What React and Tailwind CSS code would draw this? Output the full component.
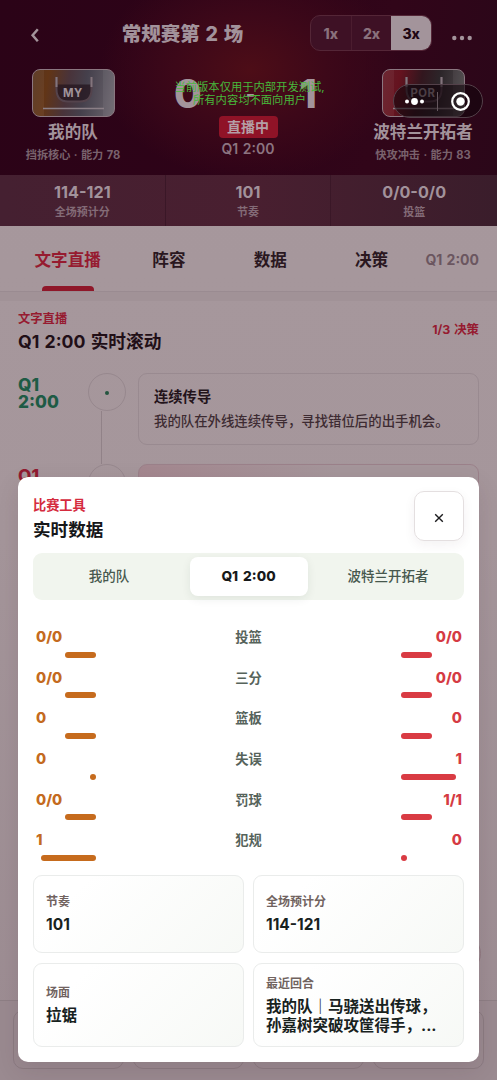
import React, { useState } from 'react';
import { clsx } from 'clsx';

const SPEEDS = ['1x', '2x', '3x'];
const TABS = ['文字直播', '阵容', '数据', '决策'];

const SUMMARY = [
  { value: '114-121', label: '全场预计分' },
  { value: '101', label: '节奏' },
  { value: '0/0-0/0', label: '投篮' },
];

// bar widths are px
const COMPARE = [
  { label: '投篮', home: '0/0', away: '0/0', homeBar: 31, awayBar: 31 },
  { label: '三分', home: '0/0', away: '0/0', homeBar: 31, awayBar: 31 },
  { label: '篮板', home: '0', away: '0', homeBar: 31, awayBar: 31 },
  { label: '失误', home: '0', away: '1', homeBar: 6, awayBar: 55 },
  { label: '罚球', home: '0/0', away: '1/1', homeBar: 31, awayBar: 31 },
  { label: '犯规', home: '1', away: '0', homeBar: 55, awayBar: 6 },
];

function Jersey({ code, away }) {
  return (
    <div
      className={clsx(
        'relative w-[83px] h-[48px] rounded-[8px] border border-[#8b7780] overflow-hidden',
        away
          ? 'bg-[linear-gradient(100deg,#641b27_0%,#65131f_20%,#32161e_45%,#2c2529_65%,#514b4e_100%)]'
          : 'bg-[linear-gradient(100deg,#56341f_0%,#623516_18%,#49333a_42%,#45404c_62%,#6c666e_100%)]'
      )}
    >
      <div className="absolute inset-y-0 left-0 w-[11px] bg-white/5" />
      <div className="absolute inset-y-0 right-0 w-[11px] bg-white/5" />
      <svg className="absolute inset-0" width="81" height="46" viewBox="0 0 81 46" fill="none">
        <path d="M23.5 14.5 H58.5 V20 Q58.5 31.5 48 31.5 H34 Q23.5 31.5 23.5 20 Z" fill="#24151f" fillOpacity=".75" />
        <path d="M23.5 7 V19 Q23.5 31.5 35 31.5 H47 Q58.5 31.5 58.5 19 V7" stroke="#54434c" strokeWidth="2" />
        <path d="M23.5 7 V17 M58.5 7 V17" stroke="#83757d" strokeWidth="2" />
        <path d="M10 38.5 H71" stroke="#8b7f86" strokeWidth="1.5" />
      </svg>
      <span className="absolute inset-x-0 top-[17px] text-center text-[11.3px] leading-[13px] font-bold tracking-[0.5px] text-[#a0939a]">
        {code}
      </span>
    </div>
  );
}

function Team({ code, name, sub, away }) {
  return (
    <div className="w-[110px] flex flex-col items-center whitespace-nowrap">
      <Jersey code={code} away={away} />
      <div className="mt-[4px] text-[16.6px] leading-[22px] font-bold text-[#a2929b]">{name}</div>
      <div className="mt-[4px] text-[11.2px] leading-4 font-bold text-[#79626d] [word-spacing:0.7px]">{sub}</div>
    </div>
  );
}

function Header() {
  return (
    <header className="h-[175px] shrink-0 bg-[radial-gradient(ellipse_150px_110px_at_250px_70px,#4d0d17_0%,#3d0819_50%,#3d081900_100%),linear-gradient(100deg,#2b0317_0%,#2e0318_50%,#310519_75%,#2b0719_100%)]">
      <div className="h-[66px] flex items-center pl-[29px] pr-[25px]">
        <svg className="w-3 h-4 mt-[3px]" viewBox="0 0 12 16" fill="none">
          <path d="M8.8 2.3 L3.6 8.3 L8.8 14.3" stroke="#a3949b" strokeWidth="2.5" />
        </svg>
        <h1 className="ml-[80px] mt-[1px] w-[123px] flex justify-center text-[19.5px] leading-7 font-extrabold text-[#a2929b] whitespace-nowrap [word-spacing:1.5px]">
          常规赛第 2 场
        </h1>
        <div className="ml-[66px] w-[122px] h-[36px] flex rounded-[10px] border border-[#542637] bg-[#3e1125] overflow-hidden">
          {SPEEDS.map((s, i) => (
            <div
              key={s}
              className={clsx(
                'flex-1 flex items-center justify-center text-[14px] font-extrabold',
                i === 2 ? 'bg-[#a3949b] text-[#200713]' : 'text-[#8a717d]',
                i === 0 && 'border-r border-[#4b1d2f]'
              )}
            >
              {s}
            </div>
          ))}
        </div>
        <svg className="ml-[20px] mt-[10px] w-5 h-1.5" viewBox="0 0 20 6" fill="#a3949b">
          <circle cx="2.3" cy="3" r="2.2" />
          <circle cx="10" cy="3" r="2.2" />
          <circle cx="17.7" cy="3" r="2.2" />
        </svg>
      </div>
      <div className="flex justify-between pl-[18px] pr-[19px] pt-[3px]">
        <Team code="MY" name="我的队" sub="挡拆核心 · 能力 78" />
        <div className="flex flex-col items-center">
          <div className="w-[150px] h-[47px] flex justify-between items-center pl-[1px] pr-[6px] pt-[3px] text-[40px] leading-none font-extrabold text-[#a3949b]">
            <span>0</span>
            <span className="text-[20px]">-</span>
            <span>1</span>
          </div>
          <div className="w-[59px] h-[22px] rounded-[4px] bg-[#8f1327] flex items-center justify-center text-[14px] leading-5 pb-[1px] font-bold text-[#b49fa6]">
            直播中
          </div>
          <div className="mt-[2px] text-[14px] leading-[18px] font-semibold text-[#8c7480] [word-spacing:1px]">Q1 2:00</div>
        </div>
        <Team code="POR" name="波特兰开拓者" sub="快攻冲击 · 能力 83" away />
      </div>
    </header>
  );
}

function EventRow({ tone, children }) {
  return (
    <div className="flex items-start">
      <div
        className={clsx(
          'w-[70px] pt-[3px] text-[17.2px] leading-[17px] font-extrabold',
          tone === 'red' ? 'text-[#911b30]' : 'text-[#1e5b45]'
        )}
      >
        Q1
        <br />
        2:00
      </div>
      <div className="w-[50px] h-[90.5px] flex flex-col">
        <div className="w-[38px] h-[38px] shrink-0 rounded-full border border-[#97888e] flex items-center justify-center">
          <div className="w-1 h-1 mt-[2px] rounded-full bg-[#24553f]" />
        </div>
        <div className="ml-[13px] w-px flex-1 bg-[#918288]" />
      </div>
      <div
        className={clsx(
          'w-[341px] h-[72px] rounded-[9px] border px-[15px] py-[13px]',
          tone === 'red'
            ? 'border-[#9b818a] bg-[linear-gradient(110deg,#a4878f,#a5969b_55%)]'
            : 'border-[#998a90]'
        )}
      >
        {children}
      </div>
    </div>
  );
}

function StatSheet() {
  const [open, setOpen] = useState(true);
  if (!open) return null;

  return (
    <section className="absolute left-[18px] top-[477px] w-[461px] h-[585px] rounded-[10px] bg-white px-[15px] pt-[14px] shadow-[0_8px_24px_rgba(60,25,40,0.12)]">
      <div className="flex justify-between">
        <div className="pt-[4px]">
          <div className="text-[13.2px] leading-[20px] font-bold text-[#d52b3e]">比赛工具</div>
          <h2 className="mt-[2px] text-[17.6px] leading-[26px] font-bold text-[#161719]">实时数据</h2>
        </div>
        <button
          onClick={() => setOpen(false)}
          className="w-[50px] h-[50px] rounded-[10px] border border-[#e4dfe0] shadow-[0_4px_12px_rgba(60,40,50,0.06)] flex items-center justify-center"
        >
          <svg className="w-[10px] h-[10px] mt-[3px]" viewBox="0 0 10 10" fill="none">
            <path d="M1.2 1.2 L8.8 8.8 M8.8 1.2 L1.2 8.8" stroke="#1c1c1e" strokeWidth="1.4" />
          </svg>
        </button>
      </div>

      <div className="mt-[10px] h-[47px] rounded-[9px] bg-[#f1f5ee] p-[4px] grid grid-cols-[148px_118px_1fr] gap-[5px] text-[13.5px] text-[#47584d]">
        <div className="flex items-center justify-center pr-[4px] font-medium">我的队</div>
        <div className="rounded-[8px] bg-white shadow-[0_3px_10px_rgba(30,50,40,0.08)] flex items-center justify-center pr-[1px] font-extrabold text-[13.7px] text-[#17191a] [word-spacing:2px]">
          Q1 2:00
        </div>
        <div className="flex items-center justify-center pl-[3px] font-medium">波特兰开拓者</div>
      </div>

      <div className="mt-[27px] pl-[3px] pr-[2px]">
        {COMPARE.map((row) => (
          <div key={row.label} className="h-[40.7px] flex justify-between">
            <div className="w-[60px] flex flex-col text-[14.7px] leading-5 font-extrabold text-[#c46a20]">
              <span>{row.home}</span>
              <span className="mt-[4.5px] h-[6px] self-end rounded-full bg-[#c66b1d]" style={{ width: row.homeBar }} />
            </div>
            <div className="text-[13.3px] leading-5 font-bold text-[#56635b]">{row.label}</div>
            <div className="w-[61px] flex flex-col text-[14.7px] leading-5 font-extrabold text-[#d53a43] text-right">
              {row.away}
              <span className="mt-[4.5px] h-[6px] rounded-full bg-[#d93b43]" style={{ width: row.awayBar }} />
            </div>
          </div>
        ))}
      </div>

      <div className="mt-[4px] grid grid-cols-2 grid-rows-[78px_84px] gap-x-[9px] gap-y-[10px]">
        <InfoCard label="节奏">101</InfoCard>
        <InfoCard label="全场预计分">114-121</InfoCard>
        <InfoCard label="场面">拉锯</InfoCard>
        <InfoCard label="最近回合">
          我的队｜马骁送出传球，
          <br />
          孙嘉树突破攻筐得手，...
        </InfoCard>
      </div>
    </section>
  );
}

function InfoCard({ label, children }) {
  return (
    <div className="rounded-[9px] border border-[#eaeceb] bg-[linear-gradient(135deg,#ffffff_20%,#f7f9f6_100%)] pl-[12px] flex flex-col justify-center whitespace-nowrap">
      <div className="text-[12px] leading-[18px] font-bold text-[#71635f]">{label}</div>
      <div className="mt-[4px] text-[15.5px] leading-[19.5px] font-bold text-[#18221e]">{children}</div>
    </div>
  );
}

// host app menu capsule and build notice, both float over the page
function HostOverlay() {
  return (
    <>
      <p className="absolute left-[1px] top-[81px] w-full text-center text-[11.3px] leading-[13.3px] text-[#47b83b] whitespace-nowrap">
        当前版本仅用于内部开发测试,
        <br />
        所有内容均不面向用户
      </p>
      <div className="absolute left-[393px] top-[84px] w-[90px] h-[34px] rounded-full border border-[#54414a] bg-[#12050b]/60 flex items-center">
        <svg width="88" height="32" viewBox="0 0 88 32" fill="#fff">
          <circle cx="13" cy="16.5" r="2" />
          <circle cx="20.5" cy="16.5" r="3.4" />
          <circle cx="28" cy="16.5" r="2" />
          <path d="M43.5 7 V26" stroke="#65575e" />
          <circle cx="66.5" cy="16.5" r="8.3" fill="none" stroke="#fff" strokeWidth="2.2" />
          <circle cx="66.5" cy="16.5" r="4.2" />
        </svg>
      </div>
    </>
  );
}

export default function App() {
  const [tab] = useState(0);

  return (
    <div className="relative w-[497px] h-[1080px] overflow-hidden flex flex-col bg-[linear-gradient(180deg,#a7989d_0%,#a5969b_50%,#9c8c92_100%)] font-['Inter','Noto_Sans_CJK_SC',sans-serif]">
      <Header />

      <div className="h-[51px] shrink-0 grid grid-cols-3 bg-[linear-gradient(90deg,#452031,#491f30_50%,#3a1d2b)]">
        {SUMMARY.map((s) => (
          <div key={s.label} className="pt-[7px] text-center border-r border-[#3a1727] last:border-r-0">
            <div className="text-[16.2px] leading-5 font-bold text-[#a2929b]">{s.value}</div>
            <div className="mt-[2px] text-[11px] leading-4 font-bold text-[#836b77]">{s.label}</div>
          </div>
        ))}
      </div>

      <nav className="h-[66px] shrink-0 flex items-stretch pl-[17px] pr-[18px] border-b border-[#9a8b91]">
        {TABS.map((t, i) => (
          <div
            key={t}
            className={clsx(
              'relative w-[101.3px] shrink-0 pt-[3px] flex items-center justify-center text-[16.6px] font-bold',
              tab === i ? 'text-[#961b30]' : 'text-[#2a171f]'
            )}
          >
            {t}
            {tab === i && <span className="absolute bottom-0 left-[25px] w-[52px] h-[5px] rounded-t-[4px] bg-[#8f1729]" />}
          </div>
        ))}
        <span className="self-center ml-auto pt-[2px] text-[14px] font-bold text-[#6b5660] whitespace-nowrap [word-spacing:1px]">Q1 2:00</span>
      </nav>

      <main className="flex-1 min-h-0 overflow-hidden border-t-[9px] border-[#9f9095]/70 px-[18px] pt-[9px]">
        <div className="flex items-center justify-between">
          <div>
            <div className="text-[12.3px] leading-[18px] font-bold text-[#961b30]">文字直播</div>
            <h2 className="mt-[1px] text-[17.7px] leading-[26px] font-bold text-[#210f17] [word-spacing:1px]">Q1 2:00 实时滚动</h2>
          </div>
          <div className="text-[12.4px] font-bold text-[#961b30] mt-[-5px] [word-spacing:1px]">1/3 决策</div>
        </div>
        <div className="mt-[18px]">
          <EventRow>
            <div className="text-[14.3px] leading-5 font-bold text-[#23131a]">连续传导</div>
            <div className="mt-[4px] text-[13.4px] leading-5 font-medium text-[#3d2b32]">
              我的队在外线连续传导，寻找错位后的出手机会。
            </div>
          </EventRow>
          <EventRow tone="red" />
        </div>
      </main>

      <footer className="h-[80px] shrink-0 border-t border-[#8e7f85] bg-[#9a8a90] px-[13px] pt-[9px] pb-[11px] grid grid-cols-4 gap-[9px]">
        {[0, 1, 2, 3].map((n) => (
          <div key={n} className="rounded-[10px] border border-[#8c7c82]" />
        ))}
      </footer>

      <div className="absolute left-[442px] top-[934px] w-[39px] h-[39px] rounded-full border border-[#917a82]" />

      <HostOverlay />
      <StatSheet />
    </div>
  );
}
